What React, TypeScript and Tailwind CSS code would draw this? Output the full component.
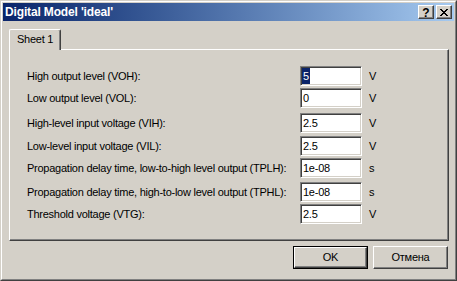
import React from "react";

const rows: { label: string; value: string; unit: string; mt: string; selected?: boolean }[] = [
  { label: "High output level (VOH):", value: "5", unit: "V", mt: "mt-0", selected: true },
  { label: "Low output level (VOL):", value: "0", unit: "V", mt: "mt-[2px]" },
  { label: "High-level input voltage (VIH):", value: "2.5", unit: "V", mt: "mt-[5px]" },
  { label: "Low-level input voltage (VIL):", value: "2.5", unit: "V", mt: "mt-[3px]" },
  { label: "Propagation delay time, low-to-high level output (TPLH):", value: "1e-08", unit: "s", mt: "mt-[2px]" },
  { label: "Propagation delay time, high-to-low level output (TPHL):", value: "1e-08", unit: "s", mt: "mt-[4px]" },
  { label: "Threshold voltage (VTG):", value: "2.5", unit: "V", mt: "mt-[2px]" },
];

function CloseGlyph() {
  const pattern = [
    "XX....XX",
    ".XX..XX.",
    "..XXXX..",
    "...XX...",
    "..XXXX..",
    ".XX..XX.",
    "XX....XX",
  ];
  const rects: React.ReactNode[] = [];
  pattern.forEach((r, y) =>
    r.split("").forEach((c, x) => {
      if (c === "X") rects.push(<rect key={`${x}-${y}`} x={x} y={y} width={1} height={1} fill="#000" />);
    })
  );
  return (
    <svg width="8" height="7" viewBox="0 0 8 7" shapeRendering="crispEdges">
      {rects}
    </svg>
  );
}

function TitleButton({ children }: { children: React.ReactNode }) {
  return (
    <div className="w-[16px] h-[14px] bg-[#d4d0c8] border border-t-white border-l-white border-r-[#404040] border-b-[#404040] shadow-[inset_-1px_-1px_0_#808080] flex items-center justify-center">
      {children}
    </div>
  );
}

export default function App() {
  return (
    <div
      className="w-[457px] h-[281px] bg-[#d4d0c8] border border-t-[#d4d0c8] border-l-[#d4d0c8] border-r-[#404040] border-b-[#404040] text-black"
      style={{ fontFamily: '"Liberation Sans", Arial, sans-serif' }}
    >
      <div className="h-full border border-t-white border-l-white border-r-[#808080] border-b-[#808080] p-px flex flex-col">
        {/* Title bar */}
        <div className="h-[18px] shrink-0 bg-linear-to-r from-[#0a246a] to-[#a6caf0] flex items-center pl-[2px] pr-[2px]">
          <span className="text-white font-bold text-[12px] tracking-[-0.15px] leading-none flex-1">
            Digital Model 'ideal'
          </span>
          <div className="flex items-center gap-[2px]">
            <TitleButton>
              <span className="font-bold text-[12px] leading-none mt-[1px]">?</span>
            </TitleButton>
            <TitleButton>
              <CloseGlyph />
            </TitleButton>
          </div>
        </div>

        {/* Body */}
        <div className="flex-1 flex flex-col pl-[6px] pr-[5px] pt-[8px] text-[11px] tracking-[-0.25px]">
          {/* Tab */}
          <div className="flex">
            <div className="relative z-10 w-[52px] h-[21px] bg-[#d4d0c8] border-l border-t border-r border-l-white border-t-white border-r-[#404040] rounded-tl-[2px] rounded-tr-[2px] shadow-[inset_-1px_0_0_#808080] flex items-center pl-[7px] pb-[1px]">
              Sheet 1
            </div>
          </div>
          {/* Panel */}
          <div className="-mt-px h-[192px] border border-t-white border-l-white border-r-[#404040] border-b-[#404040] shadow-[inset_-1px_-1px_0_#808080] pt-[16px] pl-[17px] flex flex-col">
            {rows.map((r) => (
              <div key={r.label} className={`flex items-center h-[20px] ${r.mt}`}>
                <div className="w-[273px] whitespace-nowrap">{r.label}</div>
                <div className="w-[62px] h-[20px] bg-white border border-t-[#808080] border-l-[#808080] border-r-white border-b-white shadow-[inset_1px_1px_0_#404040,inset_-1px_-1px_0_#d4d0c8] flex items-center pl-[2px]">
                  {r.selected ? (
                    <span className="bg-[#0a246a] text-white px-[1px] -ml-[1px]">{r.value}</span>
                  ) : (
                    <span>{r.value}</span>
                  )}
                </div>
                <div className="ml-[7px]">{r.unit}</div>
              </div>
            ))}
          </div>
          {/* Buttons */}
          <div className="flex justify-end gap-[5px] mt-[5px] pr-[1px]">
            <div className="w-[75px] h-[23px] border border-black">
              <div className="w-full h-full border border-t-white border-l-white border-r-[#404040] border-b-[#404040] shadow-[inset_-1px_-1px_0_#808080] flex items-center justify-center">
                OK
              </div>
            </div>
            <div className="w-[75px] h-[23px] border border-t-white border-l-white border-r-[#404040] border-b-[#404040] shadow-[inset_-1px_-1px_0_#808080] flex items-center justify-center">
              Отмена
            </div>
          </div>
        </div>
      </div>
    </div>
  );
}
